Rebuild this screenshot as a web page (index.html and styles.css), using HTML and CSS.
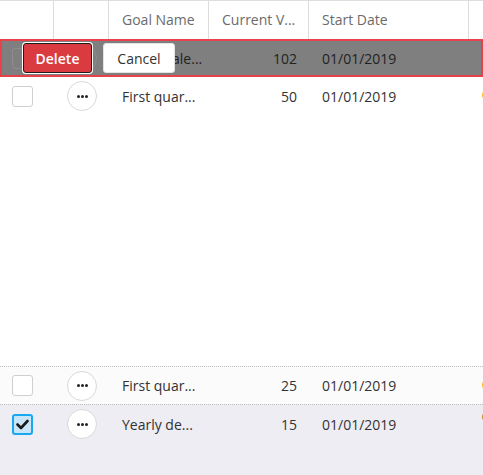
FILE: index.html
```html
<!DOCTYPE html>
<html>
<head>
<meta charset="utf-8">
<link rel="stylesheet" href="styles.css">
</head>
<body>
<div class="grid">
  <div class="row head">
    <div class="cell sep"></div>
    <div class="cell sep"></div>
    <div class="cell sep text">Goal Name</div>
    <div class="cell sep text">Current V...</div>
    <div class="cell sep text">Start Date</div>
    <div class="cell"></div>
  </div>

  <div class="row editing">
    <div class="cell"><span class="check"></span></div>
    <div class="cell"><span class="more"><i></i><i></i><i></i></span></div>
    <div class="cell text">Yearly sale...</div>
    <div class="cell text num">102</div>
    <div class="cell text">01/01/2019</div>
    <div class="cell"></div>
    <div class="actions">
      <button class="btn delete">Delete</button>
      <button class="btn cancel">Cancel</button>
    </div>
  </div>

  <div class="row">
    <div class="cell"><span class="check"></span></div>
    <div class="cell"><span class="more"><i></i><i></i><i></i></span></div>
    <div class="cell text">First quar...</div>
    <div class="cell text num">50</div>
    <div class="cell text">01/01/2019</div>
    <div class="cell"><span class="status"></span></div>
  </div>

  <div class="spacer"></div>

  <div class="row alt">
    <div class="cell"><span class="check"></span></div>
    <div class="cell"><span class="more"><i></i><i></i><i></i></span></div>
    <div class="cell text">First quar...</div>
    <div class="cell text num">25</div>
    <div class="cell text">01/01/2019</div>
    <div class="cell"><span class="status"></span></div>
  </div>

  <div class="selected-area">
    <div class="row sel">
      <div class="cell"><span class="check on"><svg width="13" height="11" viewBox="0 0 13 11"><path d="M1.5 5.5 L5 9 L11.5 2" fill="none" stroke="#1a1a1a" stroke-width="2.6" stroke-linecap="round" stroke-linejoin="round"/></svg></span></div>
      <div class="cell"><span class="more"><i></i><i></i><i></i></span></div>
      <div class="cell text">Yearly de...</div>
      <div class="cell text num">15</div>
      <div class="cell text">01/01/2019</div>
      <div class="cell"><span class="status dark"></span></div>
    </div>
  </div>
</div>
</body>
</html>
```

FILE: styles.css
```css
* { box-sizing: border-box; }
html, body {
  margin: 0;
  padding: 0;
  width: 483px;
  height: 475px;
  overflow: hidden;
  background: #fff;
}
body {
  font-family: "Open Sans", "Noto Sans", sans-serif;
  font-size: 14px;
  color: #333;
}
.grid {
  display: flex;
  flex-direction: column;
  height: 475px;
}
.row {
  display: grid;
  grid-template-columns: 54px 55px 100px 100px 160px 30px;
  height: 38px;
  align-items: center;
  position: relative;
  flex: none;
}
.cell {
  height: 100%;
  display: flex;
  align-items: center;
  white-space: nowrap;
  overflow: hidden;
}
.text { padding-left: 13px; }
.num { justify-content: flex-end; padding-left: 0; padding-right: 12px; }
.head {
  height: 39px;
  border-top: 1px solid #dedede;
  color: #6b6b6b;
}
.head .cell { padding-bottom: 1px; }
.sep { border-right: 1px solid #dcdcdc; }
.check {
  width: 21px;
  height: 21px;
  margin-left: 12px;
  border: 1px solid #cfcfcf;
  border-radius: 3px;
  background: #fff;
  display: flex;
  align-items: center;
  justify-content: center;
}
.check.on {
  border: 2px solid #16a9f2;
  background: #c9e6f8;
}
.more {
  width: 30px;
  height: 30px;
  margin-left: 13px;
  border: 1px solid #d8d8d8;
  border-radius: 50%;
  background: #fff;
  display: flex;
  align-items: center;
  justify-content: center;
  gap: 1px;
}
.more i {
  width: 3px;
  height: 3px;
  background: #222;
  border-radius: 50%;
}
.editing {
  background: #7f7f7f;
  box-shadow: inset 0 0 0 2px #e5424a;
}
.editing .cell { color: #222; }
.editing .check, .editing .more { background: transparent; border-color: #8d8d8d; }
.actions {
  position: absolute;
  left: 23px;
  top: 4px;
  display: flex;
  align-items: center;
  gap: 11px;
}
.btn {
  font-family: "Open Sans", "Noto Sans", sans-serif;
  font-size: 14px;
  border-radius: 3px;
  padding: 0;
  cursor: pointer;
}
.delete {
  width: 69px;
  height: 30px;
  background: #d93b41;
  color: #fff;
  font-weight: 600;
  border: 1px solid #1c1c1c;
  box-shadow: 0 0 0 1px #fff;
}
.cancel {
  width: 72px;
  height: 30px;
  background: #fff;
  color: #333;
  border: 1px solid #e3e3e3;
}
.spacer { height: 251px; flex: none; }
.alt {
  background: #fbfbfb;
  border-top: 1px dotted #bdbdbd;
}
.selected-area {
  flex: 1;
  background: #efedf4;
  border-top: 1px dotted #bdbdbd;
}
.sel { height: 38px; }
.status {
  width: 8px;
  height: 8px;
  border-radius: 50%;
  background: #f5b731;
  margin-left: 13px;
  margin-bottom: 2px;
}
.status.dark { background: #c98a3a; margin-bottom: 14px; }
```
